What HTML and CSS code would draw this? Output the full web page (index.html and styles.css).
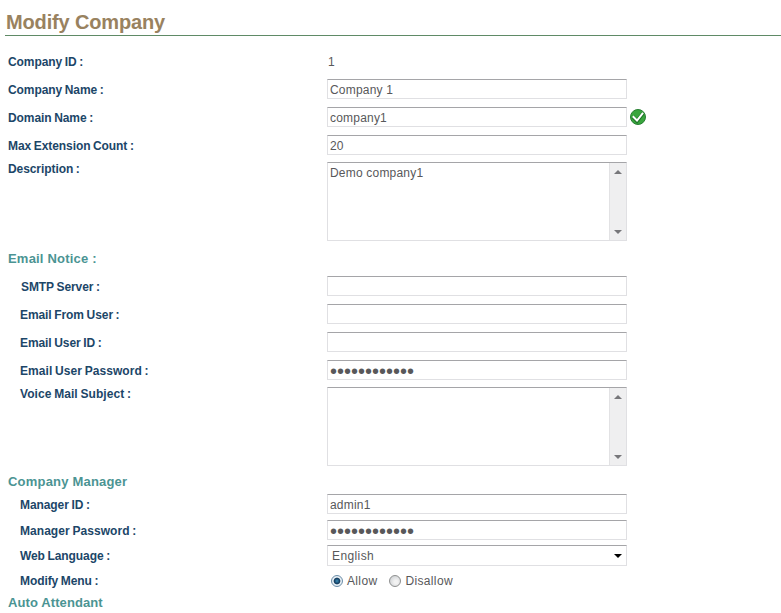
FILE: index.html
```html
<!DOCTYPE html>
<html lang="en">
<head>
    <meta charset="UTF-8">
    <title>Modify Company</title>
    <link rel="stylesheet" href="styles.css">
</head>
<body>
    <h1 class="title">Modify Company</h1>
    <form class="form">
        <div class="row">
            <label class="label">Company ID :</label>
            <span class="value">1</span>
        </div>
        <div class="row">
            <label class="label">Company Name :</label>
            <input class="field" type="text" value="Company 1">
        </div>
        <div class="row">
            <label class="label">Domain Name :</label>
            <input class="field" type="text" value="company1">
            <svg class="valid" width="16" height="16" viewBox="0 0 16 16">
                <circle cx="8" cy="8" r="7.5" fill="#39a53d" stroke="#277f32"/>
                <path d="M2.8 7.8L7 12L13 4.4" fill="none" stroke="#1f7429" stroke-width="3.6"/>
                <path d="M2.8 7.3L7 11.5L13 3.9" fill="none" stroke="#fff" stroke-width="2"/>
            </svg>
        </div>
        <div class="row">
            <label class="label">Max Extension Count :</label>
            <input class="field" type="text" value="20">
        </div>
        <div class="row row-area">
            <label class="label">Description :</label>
            <div class="area">
                <textarea class="area-text">Demo company1</textarea>
                <div class="scroll"><i class="up"></i><i class="down"></i></div>
            </div>
        </div>

        <h2 class="section">Email Notice :</h2>
        <div class="row sub">
            <label class="label smtp">SMTP Server :</label>
            <input class="field" type="text">
        </div>
        <div class="row sub">
            <label class="label">Email From User :</label>
            <input class="field" type="text">
        </div>
        <div class="row sub">
            <label class="label">Email User ID :</label>
            <input class="field" type="text">
        </div>
        <div class="row sub">
            <label class="label wide">Email User Password :</label>
            <input class="field password" type="password" value="123456789012">
        </div>
        <div class="row row-area sub">
            <label class="label wide">Voice Mail Subject :</label>
            <div class="area">
                <textarea class="area-text"></textarea>
                <div class="scroll"><i class="up"></i><i class="down"></i></div>
            </div>
        </div>

        <h2 class="section manager">Company Manager</h2>
        <div class="row sub tight">
            <label class="label">Manager ID :</label>
            <input class="field" type="text" value="admin1">
        </div>
        <div class="row sub tight">
            <label class="label wide">Manager Password :</label>
            <input class="field password" type="password" value="123456789012">
        </div>
        <div class="row sub tighter">
            <label class="label">Web Language :</label>
            <div class="select">English<i class="arrow"></i></div>
        </div>
        <div class="row sub tighter">
            <label class="label">Modify Menu :</label>
            <label class="option"><i class="radio checked"></i>Allow</label>
            <label class="option"><i class="radio"></i>Disallow</label>
        </div>
        <h2 class="section attendant">Auto Attendant</h2>
    </form>
</body>
</html>
```
FILE: styles.css
```css
body {
    font-family: "Liberation Sans", Arial, sans-serif;
    font-size: 12px;
    margin: 0;
    background: #fff;
    color: #58585a;
    overflow: hidden;
}
.title {
    margin: 0 0 0 5px;
    padding: 9px 0 0 1px;
    height: 26px;
    line-height: 26px;
    font-size: 20px;
    letter-spacing: -0.15px;
    color: #99825f;
    border-bottom: 1px solid #5f8a66;
}
.form {
    padding: 11px 0 0 8px;
}
.row {
    display: flex;
    align-items: center;
    height: 28px;
}
.label {
    width: 319px;
    box-sizing: border-box;
    flex: none;
    padding-top: 2px;
    font-weight: bold;
    letter-spacing: -0.08px;
    word-spacing: -0.6px;
    color: #1c4668;
}
.wide {
    letter-spacing: 0.05px;
}
.sub .label {
    padding-left: 12px;
}
.sub .smtp {
    padding-left: 13px;
}
.value {
    font-size: 12px;
    padding: 1px 0 0 1px;
}
.field,
.area,
.select {
    box-sizing: border-box;
    width: 300px;
    border: 1px solid #e0e0e3;
    border-top-color: #a5a5a8;
    background: #fff;
}
.field {
    height: 20px;
    margin: 0;
    padding: 2px 2px 0;
    outline: none;
    border-radius: 0;
    font-family: inherit;
    font-size: 12px;
    letter-spacing: 0.2px;
    color: #58585a;
}
.password {
    font-size: 20px;
    letter-spacing: 0;
}
.valid {
    margin-left: 3px;
}
.row-area {
    align-items: flex-start;
    height: 85px;
    padding-top: 3px;
    box-sizing: border-box;
}
.row-area .label {
    padding-top: 0;
    line-height: 14px;
}
.area {
    display: flex;
    height: 79px;
}
.area-text {
    flex: 1;
    margin: 0;
    padding: 3px 2px;
    border: 0;
    outline: none;
    resize: none;
    overflow: hidden;
    font-family: inherit;
    font-size: 12px;
    letter-spacing: 0.2px;
    color: #58585a;
}
.scroll {
    width: 17px;
    box-sizing: border-box;
    border-left: 1px solid #e2e2e4;
    background: #efeff0;
    display: flex;
    flex-direction: column;
    justify-content: space-between;
    align-items: center;
    padding: 7px 0 6px;
}
.up,
.down,
.arrow {
    width: 0;
    height: 0;
    border: 4px solid transparent;
}
.up {
    border-top: 0;
    border-bottom-color: #77777a;
}
.down {
    border-bottom: 0;
    border-top-color: #77777a;
}
.section {
    margin: 0;
    height: 28px;
    line-height: 30px;
    font-size: 13px;
    letter-spacing: 0.2px;
    color: #4b9493;
}
.manager {
    height: 22px;
    line-height: 26px;
}
.tight {
    height: 26px;
}
.tighter {
    height: 25px;
}
.tighter .label {
    padding-top: 0;
}
.select {
    display: flex;
    align-items: center;
    justify-content: space-between;
    height: 21px;
    padding: 0 4px;
    letter-spacing: 0.4px;
}
.arrow {
    border-bottom: 0;
    border-top-color: #000;
}
.tighter .option {
    display: flex;
    align-items: center;
    margin: 0 12px 0 4px;
    padding-top: 1px;
    letter-spacing: 0.35px;
}
.tighter .option + .option {
    margin-left: 0;
}
.radio {
    width: 12px;
    height: 12px;
    box-sizing: border-box;
    margin-right: 4px;
    border: 1px solid #8e8f8f;
    border-radius: 50%;
    background: radial-gradient(circle at 60% 60%, #f2f2f2 20%, #c4c8cc);
}
.checked {
    border-color: #6b8da8;
    background: radial-gradient(circle, #3a8cb8 0, #123a5c 2.8px, #e6eef4 3.8px);
}
.attendant {
    height: 20px;
    line-height: 20px;
    letter-spacing: 0.1px;
}
```
